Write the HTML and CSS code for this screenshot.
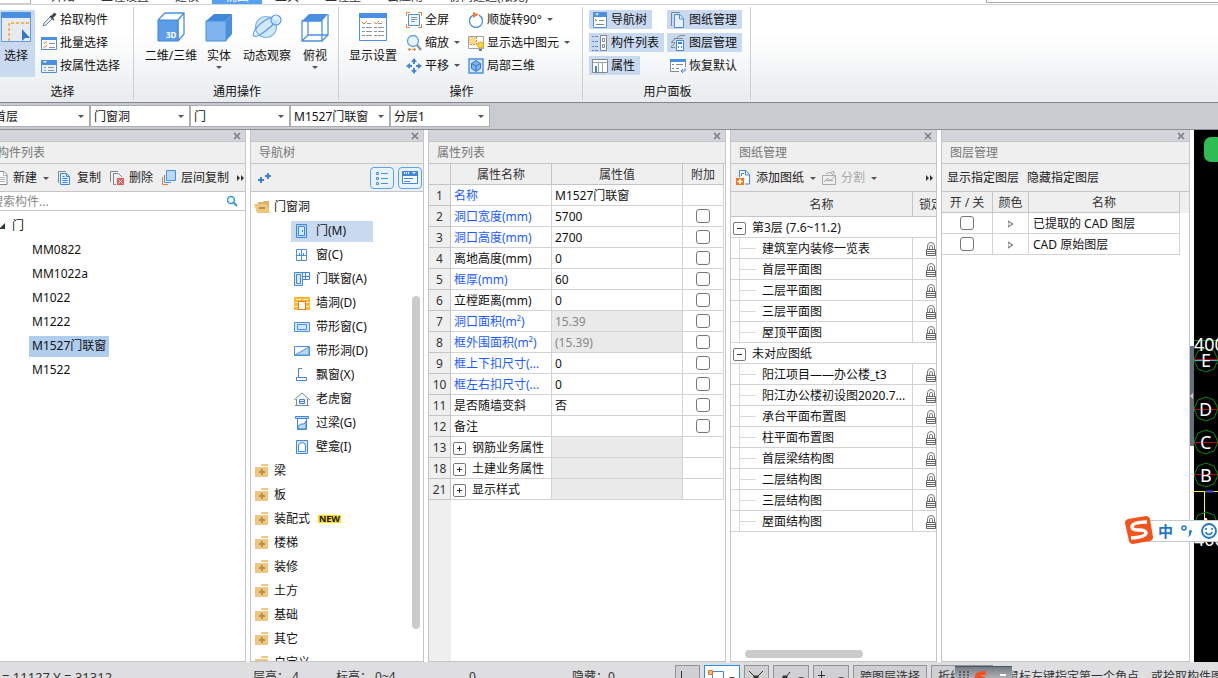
FILE: index.html
```html
<!DOCTYPE html>
<html lang="zh-CN">
<head>
    <meta charset="UTF-8">
    <meta name="viewport" content="width=device-width, initial-scale=1.0">
    <title>土建建模</title>
    <link rel="stylesheet" href="styles.css">
</head>
<body>

    <!-- 图标库 -->
    <svg class="sprite" aria-hidden="true">
        <symbol id="i-select" viewBox="0 0 30 30"><path d="M.5.5h29v29H.5z" fill="#e9eaf0" stroke="#5c9de8"/><path d="M0 0h30v6H0z" fill="#4a90e2"/><path d="M8 29V11h20" fill="none" stroke="#f5a623" stroke-width="1.500" stroke-dasharray="3 2"/><path d="M21 17l8 9h-5l-3 3z" fill="#3577c4"/></symbol>
        <symbol id="i-3d" viewBox="0 0 30 30"><path d="M2 8l7-7h19v21l-6 7M22 8l6-7M22 8v21" fill="#fff" stroke="#4a90e2" stroke-width="1.300"/><path d="M2 8h20v21H2z" fill="#5c9de8" stroke="#3f87dc"/><text x="10" y="26" font-size="8" font-weight="bold" fill="#fff">3D</text></symbol>
        <symbol id="i-solid" viewBox="0 0 30 30"><path d="M2 9l8-7h18l-6 7z" fill="#3f87dc"/><path d="M22 9l6-7v20l-6 7z" fill="#4c8dde"/><path d="M2 9h20v20H2z" fill="#7db4f0" stroke="#4a90e2"/></symbol>
        <symbol id="i-orbit" viewBox="0 0 30 30"><circle cx="14" cy="15" r="10.500" fill="#d3e9fb" stroke="#7fb4ee" stroke-width="1.200"/><path d="M19 5Q3 13 1 23q3 6 25-15" fill="none" stroke="#5b9be6" stroke-width="1.200"/><circle cx="24" cy="8" r="5" fill="#d3e9fb" fill-opacity=".7" stroke="#5b9be6" stroke-width="1.200"/></symbol>
        <symbol id="i-top" viewBox="0 0 30 30"><path d="M2 9l7-7h19l-6 7z" fill="#4a90e2"/><path d="M2 9h20v20H2zM22 29l6-6V2M8 9v14h14M2 29l6-6M22 23h6" fill="none" stroke="#4a90e2" stroke-width="1.300"/></symbol>
        <symbol id="i-display" viewBox="0 0 30 30"><path d="M1.500 1.500h27v27h-27z" fill="#fff" stroke="#4a90e2"/><path d="M1 1h28v5H1z" fill="#4a90e2"/><path d="M9 11.500h4m7 0h4M4 15.500h3m1 0h6m2 0h3m1 0h6M4 19.500h3m1 0h6m2 0h3m1 0h6M4 23.500h3m1 0h6m2 0h3m1 0h6" stroke="#8b96a0"/><path d="M4 10l2 2 3-3m7 1l2 2 3-3" fill="none" stroke="#f08030"/></symbol>
        <symbol id="i-pick" viewBox="0 0 16 16"><path d="M2 14l1-3 7-7 2 2-7 7z" fill="#d8eaf8" stroke="#7a8793"/><path d="M9 4l4 4M10.500 4.500l3-3 1 1-3 3z" fill="#555" stroke="#444" stroke-width="1.500"/></symbol>
        <symbol id="i-batch" viewBox="0 0 16 16"><path d="M.5 2.500h15v12H.5z" fill="#fff" stroke="#4a90e2"/><path d="M0 2h16v3H0z" fill="#4a90e2"/><path d="M2 7.500l1 1 3-2M2 11.500l1 1 3-2" fill="none" stroke="#f08030"/><path d="M8 8.500h6M8 12.500h6" stroke="#8b96a0"/></symbol>
        <symbol id="i-attrsel" viewBox="0 0 16 16"><path d="M.5 2.500h15v12H.5z" fill="#e8f1fc" stroke="#4a90e2"/><path d="M0 2h16v5H0z" fill="#4a90e2"/><path d="M2 3h4L4 5z" fill="#fff"/><path d="M3 9.500h2m2 0h6M3 12.500h2m2 0h6" stroke="#8b96a0"/></symbol>
        <symbol id="i-full" viewBox="0 0 16 16"><path d="M2.500 2.500h11v11h-11z" fill="#eef5fd" stroke="#4a90e2"/><path d="M5 5.500h6M5 7.500h6M5 9.500h4" stroke="#8b96a0"/><path d="M.5 4V.5H4M12 .5h3.500V4M.5 12v3.500H4M12 15.500h3.500V12" fill="none" stroke="#f08030"/></symbol>
        <symbol id="i-zoom" viewBox="0 0 16 16"><circle cx="7" cy="6" r="5.500" fill="#e8f3fe" stroke="#5c9de8" stroke-width="1.300"/><path d="M11 10l4 5" stroke="#8b96a0" stroke-width="2.500"/><path d="M2 14.500h8M4 13l-2 1.500L4 16m4-3l2 1.500L8 16" fill="none" stroke="#f08030" stroke-dasharray="3 1"/></symbol>
        <symbol id="i-pan" viewBox="0 0 16 16"><path d="M8 0l3 4H9v2H7V4H5zM8 16l3-4H9v-2H7v2H5zM0 8l4-3v2h2v2H4v2zM16 8l-4-3v2h-2v2h2v2z" fill="#3f87dc"/></symbol>
        <symbol id="i-rotate" viewBox="0 0 16 16"><path d="M11 3.200a6.500 6.500 0 1 1-6 0" fill="none" stroke="#4a90e2" stroke-width="1.300"/><path d="M5 0l6 2.500L5 6z" fill="#f08030"/></symbol>
        <symbol id="i-showsel" viewBox="0 0 16 16"><path d="M.5 1.500h15v12H.5z" fill="#fff" stroke="#9aa4ad"/><path d="M1 2h7v7H1z" fill="#ffd98a"/><path d="M8.500 2v7.500H1" fill="none" stroke="#f08030" stroke-dasharray="2 1"/><circle cx="12.500" cy="10" r="3" fill="#ffd23c" stroke="#e8b010"/><path d="M11 14h3v2h-3z" fill="#777"/></symbol>
        <symbol id="i-local" viewBox="0 0 16 16"><path d="M1 1h14v14H1z" fill="#d5e7fb" stroke="#4a90e2" stroke-width="1.400"/><path d="M8 2.500l4.500 3v5l-4.500 3-4.500-3v-5z" fill="#7db4f0" stroke="#3577c4"/><path d="M3.500 5.500L8 8l4.500-2.500M8 8v5" fill="none" stroke="#3577c4"/></symbol>
        <symbol id="i-nav" viewBox="0 0 16 16"><path d="M1.500.5h13v15h-13z" fill="#fff" stroke="#4a90e2"/><path d="M1 0h14v5H1z" fill="#4a90e2"/><path d="M3 1.500h4L5 3.500z" fill="#fff"/><path d="M3.500 7v1.500H5M7 8.500h5M4 12.500h8" fill="none" stroke="#7d8892"/></symbol>
        <symbol id="i-complist" viewBox="0 0 16 16"><path d="M0 1.500h2M0 6.500h2M0 11.500h2M0 15.500h2M3 1.500h3M3 6.500h3M3 11.500h3M3 15.500h3" stroke="#4a90e2"/><path d="M8.500.5h6v15h-6z" fill="#fff" stroke="#7d8892"/><path d="M10.500 3.500h2v3h-2zM10.500 9.500h2v3h-2z" fill="none" stroke="#7d8892"/></symbol>
        <symbol id="i-attr" viewBox="0 0 16 16"><path d="M.5 1.500h15v13H.5z" fill="#fff" stroke="#7d8892"/><path d="M.5 4.500h15M6.500 4v10M10.500 4v10" stroke="#9aa4ad"/><path d="M3 8h2v6H3z" fill="#3f87dc"/></symbol>
        <symbol id="i-sheets" viewBox="0 0 16 16"><path d="M1.500 14V.5H10" fill="none" stroke="#7d8892"/><path d="M4.500 2.500H10l3.500 4v9h-9z" fill="#e8f2fd" stroke="#4a90e2"/><path d="M9.500 3v4h4" fill="none" stroke="#4a90e2"/></symbol>
        <symbol id="i-layers" viewBox="0 0 16 16"><path d="M6 3.500l4-3h5M4 3.500h9M5 4L1 7.500h4M1 11.500l4-3M1 12.500h4" fill="none" stroke="#7d8892"/><path d="M6.500 5.500h7v10h-7z" fill="#fff" stroke="#3f87dc"/><path d="M8 7h4v2H8zM8 11h1v2H8zM11 11h1v2h-1z" fill="#3f87dc"/></symbol>
        <symbol id="i-restore" viewBox="0 0 16 16"><path d="M9 13.500H.5v-12h15V9" fill="#fff" stroke="#7d8892"/><path d="M0 1h16v3H0z" fill="#4a90e2"/><path d="M2 6.500h2m2 0h7M2 10.500h2m2 0h3" stroke="#7d8892"/><path d="M15 10v3h-4m2-2l-2 2 2 2" fill="none" stroke="#3f87dc"/></symbol>
        <symbol id="i-new" viewBox="0 0 16 16"><path d="M2.500 1.500H11l3 3v10H2.500z" fill="#fff" stroke="#7d8892"/><path d="M10.500 1.500v4H14M4 7.500h8M4 9.500h8M4 11.500h8" fill="none" stroke="#a8b0b8"/></symbol>
        <symbol id="i-copy" viewBox="0 0 16 16"><path d="M1.500 13V1.500H9" fill="none" stroke="#7d8892"/><path d="M3.500 3.500h6l3 3v8h-9z" fill="#e1effd" stroke="#3f87dc"/><path d="M9.500 3.500v3h3M5.500 8.500h5M5.500 10.500h5M5.500 6.500h2M5.500 12.500h5" fill="none" stroke="#3f87dc"/></symbol>
        <symbol id="i-delete" viewBox="0 0 16 16"><path d="M1.500 12V1.500H9M7 14.500H4.500v-11h5l3 3V7" fill="none" stroke="#7d8892"/><path d="M8 8h7v7H8z" fill="#e05a5a"/><path d="M9.500 9.500l4 4m0-4l-4 4" stroke="#fff"/></symbol>
        <symbol id="i-floor" viewBox="0 0 16 16"><path d="M5.500.5h9v10h-9z" fill="#b9d8fa" stroke="#4a90e2"/><path d="M3.500 5v7.500H10" fill="none" stroke="#4a90e2"/><path d="M1.500 7v7.500H7" fill="none" stroke="#f08030"/></symbol>
        <symbol id="i-search" viewBox="0 0 12 12"><circle cx="5" cy="5" r="3.500" fill="#e6f4fb" stroke="#3c9acb" stroke-width="1.500"/><path d="M7.500 7.500L11 11" stroke="#3c9acb" stroke-width="2"/></symbol>
        <symbol id="i-plus2" viewBox="0 0 14 12"><path d="M0 8h6M3 5v6M7 4h6M10 1v6" stroke="#3f7fd0" stroke-width="2"/></symbol>
        <symbol id="i-listview" viewBox="0 0 16 16"><path d="M2.500 2.500h2v2h-2zM2.500 7.500h2v2h-2zM2.500 12.500h2v2h-2zM7 3.500h7M7 8.500h7M7 13.500h7" fill="none" stroke="#4a90e2"/></symbol>
        <symbol id="i-cardview" viewBox="0 0 16 16"><path d="M.5 1.500h15v12H.5z" fill="#fff" stroke="#3f87dc"/><path d="M0 1h16v5H0z" fill="#3f87dc"/><path d="M2 3h1m1 0h1m1 0h1" stroke="#fff" stroke-width="2"/><path d="M10 2h4l-2 2z" fill="#fff"/><path d="M2 8.500h9M2 11.500h6" stroke="#3f87dc"/></symbol>
        <symbol id="i-open" viewBox="0 0 16 16"><path d="M4 3h5l1-1h5v10H4z" fill="#ddb068"/><path d="M0 5h13l3 9H3z" fill="#efc67d"/><path d="M5 9h6" stroke="#a9803c" stroke-width="1.500"/></symbol>
        <symbol id="i-folder" viewBox="0 0 16 16"><path d="M7 2l1-1h6v2H7zM1 4h13v10H1z" fill="#efc67d"/><path d="M5 9h6M8 6v6" stroke="#b88e48" stroke-width="2"/></symbol>
        <symbol id="i-door" viewBox="0 0 16 16"><path d="M2.500 1.500h10v13h-10z" fill="#b9d8fa" stroke="#3f87dc"/><path d="M4.500 3.500h6v9h-6z" fill="#d8eafd" stroke="#3f87dc"/><path d="M8.500 7v2" stroke="#3f87dc"/></symbol>
        <symbol id="i-window" viewBox="0 0 16 16"><path d="M2.500 2.500h10v11h-10zM7.500 2v12M2 8.500h11M5.500 8V6m4 2V6" fill="none" stroke="#4a90e2"/></symbol>
        <symbol id="i-doorwin" viewBox="0 0 16 16"><path d="M.5 1.500h8v13h-8zM2.500 3.500h4v9h-4z" fill="#d8eafd" stroke="#3f87dc"/><path d="M8.500 1.500h7v7h-7zM11.500 1v8M8 5.500h8" fill="none" stroke="#3f87dc"/></symbol>
        <symbol id="i-wallhole" viewBox="0 0 16 16"><path d="M0 2h16v13H0z" fill="#ffb72e"/><path d="M2 4.500h5m2 0h5M1 7.500h3m8 0h3M1 11.500h3m8 0h3" stroke="#fff3d5"/><path d="M4.500 6.500h7v8h-7z" fill="#fff" stroke="#f07818"/></symbol>
        <symbol id="i-stripwin" viewBox="0 0 16 16"><path d="M.5 3.500h15v9H.5zM3.500 5.500h9v5h-9z" fill="#d2e5fa" stroke="#4a90e2"/></symbol>
        <symbol id="i-striphole" viewBox="0 0 16 16"><path d="M.5 3.500h15v9H.5z" fill="#fff" stroke="#4a90e2"/><path d="M1 12L15 4v8z" fill="#b9d8fa" stroke="#4a90e2"/></symbol>
        <symbol id="i-bay" viewBox="0 0 16 16"><path d="M8 1.500H4.500v9h8v3h-10v-3h2" fill="none" stroke="#4a80c8"/></symbol>
        <symbol id="i-dormer" viewBox="0 0 16 16"><path d="M0 9l8-7 8 7M2.500 8v6.500h11V8M1 14.500h14" fill="#f5f7f9" stroke="#7d8892"/><path d="M5.500 8.500h5v4h-5zM5 10.500h6" fill="#e0effd" stroke="#3f87dc"/></symbol>
        <symbol id="i-lintel" viewBox="0 0 16 16"><path d="M1.500 1.500h13v2h-13z" fill="#b9d8fa" stroke="#3f87dc"/><path d="M3.500 3.500h9v11h-9z" fill="#fff" stroke="#3f87dc"/><path d="M4 14v-3l3-2h3l2-3v8z" fill="#b9d8fa" stroke="#3f87dc"/></symbol>
        <symbol id="i-niche" viewBox="0 0 16 16"><path d="M2.500 1.500h11v13h-11z" fill="#d8eafd" stroke="#3f87dc"/><path d="M4.500 12.500V7q0-3.500 3.500-3.500T11.500 7v5.500z" fill="#fff" stroke="#3f87dc"/></symbol>
        <symbol id="i-addsheet" viewBox="0 0 16 16"><path d="M3.500 7V.5H10l3.500 4V14H9" fill="#fff" stroke="#3f87dc"/><path d="M9.500 1v4h4M5.500 6V3.500H8" fill="none" stroke="#3f87dc"/><path d="M0 8h8v7H0z" fill="#f07818"/><path d="M4 9v5M1.500 11.500h5" stroke="#fff" stroke-width="1.500"/></symbol>
        <symbol id="i-split" viewBox="0 0 16 16"><path d="M5 3.500l8-2v3M1.500 5.500h13v9h-13zM3 12l4-4 2 3 4-4M10 3l4 4M4 10.500h8" fill="none" stroke="#aaa"/></symbol>
        <symbol id="i-lock" viewBox="0 0 12 14"><path d="M2.500 7V4q0-3.500 3.500-3.500T9.500 4v3M4.500 7V4.500q0-1 1.500-1t1.500 1V7" fill="none" stroke="#777"/><path d="M1.500 7.500h9v6h-9zM1 9.500h10M1 11.500h10" fill="#fff" stroke="#666"/></symbol>
        <symbol id="i-close" viewBox="0 0 8 8"><path d="M1 1l6 6M7 1L1 7" stroke="#777b82" stroke-width="1.500"/></symbol>
        <symbol id="i-more" viewBox="0 0 8 6"><path d="M0 0l3 3-3 3zM4 0l3 3-3 3z" fill="#333"/></symbol>
    </svg>

    <div class="app">

        <!-- 菜单页签 -->
        <nav class="tabs">
            <div class="app-corner"></div>
            <a href="#">开始</a>
            <a href="#">工程设置</a>
            <a href="#">建模</a>
            <a href="#" class="active">视图</a>
            <a href="#">工具</a>
            <a href="#">工程量</a>
            <a href="#">云应用</a>
            <a href="#">协同建造(限免)</a>
            <div class="tabs-search"></div>
        </nav>

        <!-- 功能区 -->
        <header class="ribbon">
            <section class="group group-select">
                <div class="group-body">
                    <button class="big on"><svg><use href="#i-select"/></svg>选择</button>
                    <div class="stack">
                        <button class="small"><svg><use href="#i-pick"/></svg>拾取构件</button>
                        <button class="small"><svg><use href="#i-batch"/></svg>批量选择</button>
                        <button class="small"><svg><use href="#i-attrsel"/></svg>按属性选择</button>
                    </div>
                </div>
                <div class="group-title">选择</div>
            </section>
            <section class="group group-common">
                <div class="group-body">
                    <button class="big wide"><svg><use href="#i-3d"/></svg>二维/三维</button>
                    <button class="big"><svg><use href="#i-solid"/></svg>实体<i class="caret"></i></button>
                    <button class="big wide"><svg><use href="#i-orbit"/></svg>动态观察</button>
                    <button class="big"><svg><use href="#i-top"/></svg>俯视<i class="caret"></i></button>
                </div>
                <div class="group-title">通用操作</div>
            </section>
            <section class="group group-operate">
                <div class="group-body">
                    <button class="big wide"><svg><use href="#i-display"/></svg>显示设置</button>
                    <div class="stack">
                        <button class="small"><svg><use href="#i-full"/></svg>全屏</button>
                        <button class="small"><svg><use href="#i-zoom"/></svg>缩放<i class="caret"></i></button>
                        <button class="small"><svg><use href="#i-pan"/></svg>平移<i class="caret"></i></button>
                    </div>
                    <div class="stack">
                        <button class="small"><svg><use href="#i-rotate"/></svg>顺旋转90°<i class="caret"></i></button>
                        <button class="small"><svg><use href="#i-showsel"/></svg>显示选中图元<i class="caret"></i></button>
                        <button class="small"><svg><use href="#i-local"/></svg>局部三维</button>
                    </div>
                </div>
                <div class="group-title">操作</div>
            </section>
            <section class="group group-panels">
                <div class="group-body">
                    <div class="stack">
                        <button class="small on"><svg><use href="#i-nav"/></svg>导航树</button>
                        <button class="small on"><svg><use href="#i-complist"/></svg>构件列表</button>
                        <button class="small on"><svg><use href="#i-attr"/></svg>属性</button>
                    </div>
                    <div class="stack">
                        <button class="small on"><svg><use href="#i-sheets"/></svg>图纸管理</button>
                        <button class="small on"><svg><use href="#i-layers"/></svg>图层管理</button>
                        <button class="small"><svg><use href="#i-restore"/></svg>恢复默认</button>
                    </div>
                </div>
                <div class="group-title">用户面板</div>
            </section>
        </header>

        <!-- 楼层与构件切换 -->
        <div class="filters">
            <div class="combo"><select aria-label="楼层"><option>首层</option></select></div>
            <div class="combo"><select aria-label="构件大类"><option>门窗洞</option></select></div>
            <div class="combo"><select aria-label="构件类型"><option>门</option></select></div>
            <div class="combo"><select aria-label="构件"><option>M1527门联窗</option></select></div>
            <div class="combo"><select aria-label="分层"><option>分层1</option></select></div>
        </div>

        <main class="workspace">

            <!-- 构件列表 -->
            <section class="panel panel-components">
                <div class="grip"><button aria-label="关闭"><svg><use href="#i-close"/></svg></button></div>
                <h2>构件列表</h2>
                <div class="toolbar">
                    <button><svg><use href="#i-new"/></svg>新建<i class="caret"></i></button>
                    <button><svg><use href="#i-copy"/></svg>复制</button>
                    <button><svg><use href="#i-delete"/></svg>删除</button>
                    <button><svg><use href="#i-floor"/></svg>层间复制</button>
                    <button class="more" aria-label="更多"><svg><use href="#i-more"/></svg></button>
                </div>
                <div class="search">
                    <input type="text" aria-label="搜索构件" placeholder="搜索构件...">
                    <svg><use href="#i-search"/></svg>
                </div>
                <ul class="components">
                    <li class="root">门</li>
                    <li><span>MM0822</span></li>
                    <li><span>MM1022a</span></li>
                    <li><span>M1022</span></li>
                    <li><span>M1222</span></li>
                    <li><span class="selected">M1527门联窗</span></li>
                    <li><span>M1522</span></li>
                </ul>
            </section>

            <!-- 导航树 -->
            <section class="panel panel-nav">
                <div class="grip"><button aria-label="关闭"><svg><use href="#i-close"/></svg></button></div>
                <h2>导航树</h2>
                <div class="toolbar">
                    <button aria-label="添加"><svg class="plus"><use href="#i-plus2"/></svg></button>
                    <button class="view first" aria-label="列表视图"><svg><use href="#i-listview"/></svg></button>
                    <button class="view" aria-label="卡片视图"><svg><use href="#i-cardview"/></svg></button>
                </div>
                <div class="tree">
                    <ul>
                        <li><svg><use href="#i-open"/></svg>门窗洞</li>
                        <li class="child"><span class="selected"><svg><use href="#i-door"/></svg>门(M)</span></li>
                        <li class="child"><span><svg><use href="#i-window"/></svg>窗(C)</span></li>
                        <li class="child"><span><svg><use href="#i-doorwin"/></svg>门联窗(A)</span></li>
                        <li class="child"><span><svg><use href="#i-wallhole"/></svg>墙洞(D)</span></li>
                        <li class="child"><span><svg><use href="#i-stripwin"/></svg>带形窗(C)</span></li>
                        <li class="child"><span><svg><use href="#i-striphole"/></svg>带形洞(D)</span></li>
                        <li class="child"><span><svg><use href="#i-bay"/></svg>飘窗(X)</span></li>
                        <li class="child"><span><svg><use href="#i-dormer"/></svg>老虎窗</span></li>
                        <li class="child"><span><svg><use href="#i-lintel"/></svg>过梁(G)</span></li>
                        <li class="child"><span><svg><use href="#i-niche"/></svg>壁龛(I)</span></li>
                        <li><svg><use href="#i-folder"/></svg>梁</li>
                        <li><svg><use href="#i-folder"/></svg>板</li>
                        <li><svg><use href="#i-folder"/></svg>装配式<b class="new">NEW</b></li>
                        <li><svg><use href="#i-folder"/></svg>楼梯</li>
                        <li><svg><use href="#i-folder"/></svg>装修</li>
                        <li><svg><use href="#i-folder"/></svg>土方</li>
                        <li><svg><use href="#i-folder"/></svg>基础</li>
                        <li><svg><use href="#i-folder"/></svg>其它</li>
                        <li><svg><use href="#i-folder"/></svg>自定义</li>
                    </ul>
                    <div class="scroll-v"></div>
                </div>
            </section>

            <!-- 属性列表 -->
            <section class="panel panel-props">
                <div class="grip"><button aria-label="关闭"><svg><use href="#i-close"/></svg></button></div>
                <h2>属性列表</h2>
                <div class="props-body">
                    <table class="props">
                        <colgroup><col class="c-num"><col class="c-name"><col class="c-value"><col class="c-add"></colgroup>
                        <thead>
                            <tr><th></th><th>属性名称</th><th>属性值</th><th>附加</th></tr>
                        </thead>
                        <tbody>
                            <tr><th>1</th><td class="key">名称</td><td>M1527门联窗</td><td></td></tr>
                            <tr><th>2</th><td class="key">洞口宽度(mm)</td><td>5700</td><td><input type="checkbox" aria-label="附加洞口宽度"></td></tr>
                            <tr><th>3</th><td class="key">洞口高度(mm)</td><td>2700</td><td><input type="checkbox" aria-label="附加洞口高度"></td></tr>
                            <tr><th>4</th><td>离地高度(mm)</td><td>0</td><td><input type="checkbox" aria-label="附加离地高度"></td></tr>
                            <tr><th>5</th><td class="key">框厚(mm)</td><td>60</td><td><input type="checkbox" aria-label="附加框厚"></td></tr>
                            <tr><th>6</th><td>立樘距离(mm)</td><td>0</td><td><input type="checkbox" aria-label="附加立樘距离"></td></tr>
                            <tr><th>7</th><td class="key">洞口面积(m²)</td><td class="readonly">15.39</td><td><input type="checkbox" aria-label="附加洞口面积"></td></tr>
                            <tr><th>8</th><td class="key">框外围面积(m²)</td><td class="readonly">(15.39)</td><td><input type="checkbox" aria-label="附加框外围面积"></td></tr>
                            <tr><th>9</th><td class="key">框上下扣尺寸(...</td><td>0</td><td><input type="checkbox" aria-label="附加框上下扣尺寸"></td></tr>
                            <tr><th>10</th><td class="key">框左右扣尺寸(...</td><td>0</td><td><input type="checkbox" aria-label="附加框左右扣尺寸"></td></tr>
                            <tr><th>11</th><td>是否随墙变斜</td><td>否</td><td><input type="checkbox" aria-label="附加是否随墙变斜"></td></tr>
                            <tr><th>12</th><td>备注</td><td></td><td><input type="checkbox" aria-label="附加备注"></td></tr>
                            <tr><th>13</th><td><button class="fold plus" aria-label="展开"></button>钢筋业务属性</td><td class="readonly"></td><td></td></tr>
                            <tr><th>18</th><td><button class="fold plus" aria-label="展开"></button>土建业务属性</td><td class="readonly"></td><td></td></tr>
                            <tr><th>21</th><td><button class="fold plus" aria-label="展开"></button>显示样式</td><td class="readonly"></td><td></td></tr>
                        </tbody>
                    </table>
                </div>
            </section>

            <!-- 图纸管理 -->
            <section class="panel panel-sheets">
                <div class="grip"><button aria-label="关闭"><svg><use href="#i-close"/></svg></button></div>
                <h2>图纸管理</h2>
                <div class="toolbar">
                    <button><svg><use href="#i-addsheet"/></svg>添加图纸<i class="caret"></i></button>
                    <button class="off"><svg><use href="#i-split"/></svg>分割<i class="caret"></i></button>
                    <button class="more" aria-label="更多"><svg><use href="#i-more"/></svg></button>
                </div>
                <table class="sheets">
                    <colgroup><col class="c-sheet"><col class="c-lock"></colgroup>
                    <thead>
                        <tr><th>名称</th><th>锁定</th></tr>
                    </thead>
                    <tbody>
                        <tr class="floor"><td colspan="2"><button class="fold" aria-label="折叠"></button>第3层 (7.6~11.2)</td></tr>
                        <tr><td>建筑室内装修一览表</td><td><svg><use href="#i-lock"/></svg></td></tr>
                        <tr><td>首层平面图</td><td><svg><use href="#i-lock"/></svg></td></tr>
                        <tr><td>二层平面图</td><td><svg><use href="#i-lock"/></svg></td></tr>
                        <tr><td>三层平面图</td><td><svg><use href="#i-lock"/></svg></td></tr>
                        <tr><td>屋顶平面图</td><td><svg><use href="#i-lock"/></svg></td></tr>
                        <tr class="floor"><td colspan="2"><button class="fold" aria-label="折叠"></button>未对应图纸</td></tr>
                        <tr><td>阳江项目——办公楼_t3</td><td><svg><use href="#i-lock"/></svg></td></tr>
                        <tr><td>阳江办公楼初设图2020.7...</td><td><svg><use href="#i-lock"/></svg></td></tr>
                        <tr><td>承台平面布置图</td><td><svg><use href="#i-lock"/></svg></td></tr>
                        <tr><td>柱平面布置图</td><td><svg><use href="#i-lock"/></svg></td></tr>
                        <tr><td>首层梁结构图</td><td><svg><use href="#i-lock"/></svg></td></tr>
                        <tr><td>二层结构图</td><td><svg><use href="#i-lock"/></svg></td></tr>
                        <tr><td>三层结构图</td><td><svg><use href="#i-lock"/></svg></td></tr>
                        <tr><td>屋面结构图</td><td><svg><use href="#i-lock"/></svg></td></tr>
                    </tbody>
                </table>
                <div class="scroll-h"></div>
            </section>

            <!-- 图层管理 -->
            <section class="panel panel-layers">
                <div class="grip"><button aria-label="关闭"><svg><use href="#i-close"/></svg></button></div>
                <h2>图层管理</h2>
                <div class="toolbar">
                    <button>显示指定图层</button>
                    <button>隐藏指定图层</button>
                </div>
                <div class="layers-body">
                    <table class="layers">
                        <colgroup><col class="c-onoff"><col class="c-color"><col></colgroup>
                        <thead>
                            <tr><th>开 / 关</th><th>颜色</th><th>名称</th></tr>
                        </thead>
                        <tbody>
                            <tr><td><input type="checkbox" aria-label="已提取的 CAD 图层"></td><td><i class="expand"></i></td><td>已提取的 CAD 图层</td></tr>
                            <tr><td><input type="checkbox" aria-label="CAD 原始图层"></td><td><i class="expand"></i></td><td>CAD 原始图层</td></tr>
                        </tbody>
                    </table>
                </div>
            </section>

            <div class="splitter"><div class="splitter-handle"></div></div>

            <!-- 绘图区 -->
            <section class="canvas">
                <svg aria-label="绘图区">
                    <rect x="10" y="7" width="60" height="25" rx="7" fill="#2dbd52"/>
                    <path d="M0 229.500h60" stroke="#c00"/>
                    <path d="M0 230.500h60" stroke="#37b5c8"/>
                    <path d="M0 279.500h60M0 312.500h60M0 344.500h60" stroke="#c80000"/>
                    <path d="M0 361.500h60M10.500 361v40" stroke="#ff0" fill="none"/>
                    <path d="M11 361.500h9" stroke="#3a55d8" stroke-width="2"/>
                    <g fill="none" stroke="#0a8a0a">
                        <path d="M0 210.500h30"/>
                        <path id="bubble" d="M12 218l8 3 4 9-4 9-8 3-8-3-4-9 4-9z"/>
                        <use href="#bubble" y="49"/>
                        <use href="#bubble" y="82"/>
                        <use href="#bubble" y="115"/>
                        <use href="#bubble" y="164"/>
                    </g>
                    <g fill="#fff" font-size="18">
                        <text x="0" y="221">4000</text>
                        <text x="7" y="237">E</text>
                        <text x="5" y="286">D</text>
                        <text x="6" y="319">C</text>
                        <text x="6" y="352">B</text>
                        <text x="6" y="401">A</text>
                        <text x="0" y="416">4000</text>
                    </g>
                </svg>
            </section>
        </main>

        <!-- 状态栏 -->
        <footer class="status">
            <span class="pos">X = 11127 Y = 31312</span>
            <span class="height">层高： 4</span>
            <span class="level">标高： 0~4</span>
            <span class="count">0</span>
            <span class="hidden-count">隐藏：0</span>
            <div class="snaps">
                <button class="snap icon" aria-label="正交"><svg viewBox="0 0 16 16"><path d="M2.500 2v12H14" /></svg></button>
                <button class="snap drop on" aria-label="矩形选择"><svg viewBox="0 0 16 16"><path d="M4.500 2.500h11v12h-11z" stroke="#3f87dc"/><path d="M.5 1.500h4v4h-4z" fill="#f8b482" stroke="#e07828"/></svg><i class="caret"></i></button>
                <button class="snap icon" aria-label="交点"><svg viewBox="0 0 16 16"><path d="M1 2l7 7 7-7M8 9v6"/><path d="M6 7h4v4H6z" fill="#333"/></svg></button>
                <button class="snap drop" aria-label="端点"><svg viewBox="0 0 16 16"><path d="M13 3L8 9v6"/><path d="M6 7h4v4H6z" fill="#333"/></svg><i class="caret"></i></button>
                <button class="snap drop" aria-label="中点"><svg viewBox="0 0 16 16"><path d="M4.500 2v8M1 6.500h7"/></svg><i class="caret"></i></button>
                <button class="snap">跨图层选择</button>
                <button class="snap">折线选择</button>
            </div>
            <span class="hint">鼠标左键指定第一个角点，或拾取构件图元</span>
            <div class="ime-mini"><svg viewBox="0 0 56 16"><path d="M4 5h2m2 0h2m2 0h2M4 8h2m2 0h2m2 0h2M4 11h2m2 0h2m2 0h2" stroke="#222"/><path d="M31 6q-10 0-9 4l7 2q2 3-7 3" fill="none" stroke="#f4511e" stroke-width="4"/><path d="M45 8h6" stroke="#fff" stroke-width="2"/></svg></div>
        </footer>
    </div>

    <!-- 输入法悬浮条 -->
    <div class="ime">
        <svg class="ime-logo" viewBox="0 0 28 28"><path d="M3 3l18-3q3 0 4 3l3 18q0 3-3 4L8 28q-3 0-4-3L0 7q0-3 3-4z" fill="#f2541b"/><path d="M22 6Q7 6 7 11q0 3 7 3 7 0 7 3 0 4-15 5" fill="none" stroke="#fff" stroke-width="3.500"/></svg>
        <b>中</b>
        <svg class="ime-punct" viewBox="0 0 12 16"><circle cx="3" cy="5" r="2" fill="none" stroke="#1c78c8" stroke-width="1.500"/><path d="M8 8a1.500 1.500 0 1 1 2 2q0 3-3 4 2-2 1-4z" fill="#1c78c8"/></svg>
        <svg class="ime-face" viewBox="0 0 16 16"><circle cx="8" cy="8" r="7" fill="none" stroke="#1c78c8" stroke-width="1.800"/><path d="M5 5v2m6-2v2M4.500 9q3.500 5 7 0" fill="none" stroke="#1c78c8" stroke-width="1.500"/></svg>
    </div>

</body>
</html>
```

FILE: styles.css
```css
/* General */
* {
    box-sizing: border-box;
}

body {
    margin: 0;
    height: 100vh;
    overflow: hidden;
    position: relative;
    background: #fff;
    font-family: "Noto Sans", "Noto Sans CJK SC", sans-serif;
    font-size: 12px;
    line-height: 16px;
    color: #111;
}

button,
input,
select {
    font: inherit;
    color: inherit;
    margin: 0;
}

button {
    display: flex;
    align-items: center;
    background: none;
    border: 0;
    padding: 0;
    white-space: nowrap;
}

ul {
    list-style: none;
    margin: 0;
    padding: 0;
}

svg {
    width: 16px;
    height: 16px;
    flex: none;
}

.sprite {
    position: absolute;
    width: 0;
    height: 0;
}

.caret {
    border: 3px solid transparent;
    border-top-color: #555;
    border-bottom: 0;
}

/* The window sits partly off the left, top and bottom edges */
.app {
    display: flex;
    flex-direction: column;
    height: calc(100vh + 14px);
    margin-left: -10px;
}

/* Tabs */
.tabs {
    display: flex;
    flex: none;
    height: 16px;
    margin-top: -11px;
    border-bottom: 1px solid #d0d2d5;
}

.tabs a {
    padding: 0 13px;
    color: #333;
    text-decoration: none;
    white-space: nowrap;
}

.tabs a.active {
    background: #55a2f2;
    color: #fff;
}

.app-corner {
    width: 41px;
    height: 15px;
    margin-right: 7px;
    border-right: 1px solid #aaa;
    border-bottom: 1px solid #ccc;
}

.tabs-search {
    width: 232px;
    height: 14px;
    margin-left: auto;
    border: 1px solid #aaa;
    border-right: 0;
}

/* Ribbon */
.ribbon {
    display: flex;
    flex: none;
    height: 98px;
    padding-top: 2px;
    background: linear-gradient(#fff 30%, #e8ecee);
    border-bottom: 1px solid #80868c;
}

.group {
    display: flex;
    flex-direction: column;
    height: 93px;
    border-right: 1px solid #cdd0d3;
}

.group-body {
    display: flex;
    flex: 1;
    padding-top: 3px;
}

.group-title {
    height: 16px;
    padding-left: 2px;
    text-align: center;
}

.group-select { width: 144px; }
.group-common { width: 205px; }
.group-operate { width: 244px; }
.group-panels { width: 168px; }

.group-common .group-body { padding-left: 7px; }
.group-operate .group-body { padding-left: 4px; }
.group-panels .group-body { padding-left: 6px; }

.big {
    flex-direction: column;
    width: 36px;
    height: 67px;
    padding-top: 2px;
}

.big.wide {
    width: 60px;
}

.big svg {
    width: 30px;
    height: 30px;
    margin-bottom: 6px;
}

.big .caret {
    margin-top: 2px;
}

.group-select .big {
    width: 45px;
    padding-left: 7px;
}

.stack {
    display: flex;
    flex-direction: column;
    align-items: flex-start;
    gap: 4px;
    margin-left: 3px;
}

.group-operate .stack {
    width: 62px;
    margin-left: 0;
}

.small {
    gap: 3px;
    height: 19px;
    padding: 0 5px 0 3px;
}

.small .caret {
    margin-left: 2px;
}

.group-panels .stack {
    margin-left: 0;
    width: 78px;
}

.on {
    background: #c9d9f0;
}

/* Combos */
.filters {
    display: flex;
    flex: none;
    height: 27px;
    padding: 2px 0;
    background: #c8cbd0;
    border-bottom: 1px solid #8c9197;
}

.combo {
    position: relative;
    width: 100px;
}

.combo::after {
    content: "";
    position: absolute;
    right: 6px;
    top: 10px;
    border: 3px solid transparent;
    border-top-color: #555;
    border-bottom: 0;
    pointer-events: none;
}

.combo select {
    appearance: none;
    width: 100%;
    height: 22px;
    padding: 2px 3px 0;
    background: #fff;
    border: 1px solid #a9acb0;
    border-radius: 0;
}

/* Panels */
.workspace {
    display: flex;
    flex: 1;
    min-height: 0;
}

.panel {
    display: flex;
    flex-direction: column;
    flex: none;
    margin-right: 4px;
    overflow: hidden;
    background: #fff;
    border: 1px solid #c3c5c9;
    border-top: 0;
}

.panel-components { width: 256px; }
.panel-nav { width: 174px; }
.panel-props { width: 298px; }
.panel-sheets { width: 207px; }
.panel-layers { width: 249px; margin-right: 0; }

.grip {
    display: flex;
    flex: none;
    justify-content: flex-end;
    align-items: center;
    height: 12px;
    padding-right: 4px;
    background: #d3d5db;
    border-bottom: 1px solid #c3c5c9;
}

.grip svg {
    width: 8px;
    height: 8px;
}

.panel h2 {
    flex: none;
    height: 22px;
    margin: 0;
    padding-left: 8px;
    background: #efefef;
    border-bottom: 1px solid #c3c5c9;
    color: #777;
    font-size: 12px;
    font-weight: normal;
    line-height: 22px;
}

.toolbar {
    display: flex;
    flex: none;
    align-items: center;
    height: 28px;
    padding: 1px 0 0 5px;
    gap: 8px;
    background: #efefef;
    border-bottom: 1px solid #c3c5c9;
    color: #222;
}

.toolbar button {
    gap: 4px;
}

.toolbar .caret {
    margin-left: 2px;
}

.toolbar .off {
    color: #aaa;
}

.toolbar .more {
    margin-left: auto;
    padding-right: 2px;
}

.toolbar .more svg {
    width: 8px;
    height: 6px;
}

.panel-components .toolbar {
    padding-left: 2px;
}

.panel-components h2 {
    padding-left: 6px;
}

.panel-sheets .toolbar {
    gap: 5px;
}

/* Component list */
.search {
    display: flex;
    flex: none;
    align-items: center;
    height: 19px;
    padding-right: 7px;
    border-bottom: 1px solid #c3c5c9;
}

.search input {
    flex: 1;
    min-width: 0;
    height: 18px;
    padding: 0;
    border: 0;
    outline: 0;
    background: none;
}

.search input::placeholder {
    color: #888;
}

.search svg {
    width: 12px;
    height: 12px;
}

.components {
    padding-top: 3px;
}

.components li {
    display: flex;
    align-items: center;
    height: 24px;
    padding-left: 38px;
}

.components .root {
    padding-left: 8px;
    gap: 7px;
}

.components .root::before {
    content: "";
    border-left: 6px solid transparent;
    border-bottom: 6px solid #333;
}

.components span {
    padding: 2px 3px 3px;
}

.components .selected {
    background: #b0cdee;
}

/* Navigation tree */
.panel-nav .toolbar {
    padding: 1px 1px 0 7px;
    gap: 4px;
}

.toolbar .plus {
    width: 14px;
    height: 12px;
}

.view {
    justify-content: center;
    width: 24px;
    height: 22px;
    background: #e9f3fe;
    border: 1px solid #55a2f2;
    border-radius: 4px;
}

.view.first {
    margin-left: auto;
}

.tree {
    position: relative;
    flex: 1;
    min-height: 0;
    padding-top: 3px;
    overflow: hidden;
}

.tree li {
    display: flex;
    align-items: center;
    gap: 4px;
    height: 24px;
    padding-left: 3px;
}

.tree .child {
    padding-left: 40px;
}

.tree li span {
    display: flex;
    align-items: center;
    gap: 6px;
    width: 82px;
    height: 21px;
    padding-left: 3px;
    white-space: nowrap;
}

.tree .selected {
    background: #c9d9f0;
}

.new {
    margin-left: 4px;
    padding: 0 1px;
    background: #ffdf00;
    font-size: 9px;
    line-height: 8px;
}

.scroll-v {
    position: absolute;
    right: 3px;
    top: 104px;
    bottom: 32px;
    width: 8px;
    background: #cbcbcb;
    border-radius: 4px;
}

/* Tables */
table {
    table-layout: fixed;
    border-spacing: 0;
    flex: none;
}

th,
td {
    height: 21px;
    padding: 2px 3px 0;
    border-right: 1px solid #d3d3d3;
    border-bottom: 1px solid #d3d3d3;
    overflow: hidden;
    font-weight: normal;
    line-height: 16px;
    text-align: left;
    white-space: nowrap;
}

th {
    background: #efefef;
    border-color: #c3c5c9;
    color: #333;
    text-align: center;
}

input[type="checkbox"] {
    appearance: none;
    display: block;
    width: 14px;
    height: 14px;
    margin: 0 auto 2px;
    background: #fff;
    border: 1px solid #777;
    border-radius: 3px;
}

.fold {
    display: inline-block;
    position: relative;
    width: 13px;
    height: 13px;
    margin: 0 6px 0 -1px;
    border: 1px solid #777;
    border-radius: 2px;
    vertical-align: -2px;
}

.fold::before,
.fold.plus::after {
    content: "";
    position: absolute;
    left: 3px;
    top: 5px;
    width: 5px;
    height: 1px;
    background: #333;
}

.fold.plus::after {
    transform: rotate(90deg);
}

/* Properties */
.props-body {
    flex: 1;
    background: linear-gradient(90deg, #efefef 22px, #fff 22px);
}

.props {
    width: 295px;
}

.props .c-num { width: 22px; }
.props .c-name { width: 101px; }
.props .c-value { width: 131px; }

.props tbody th {
    padding: 2px 0 0;
}

.props .key {
    color: #1a5cff;
}

.props .readonly {
    background: #eaeaea;
    color: #888;
}

/* Drawings */
.sheets {
    width: 219px;
}

.sheets .c-sheet { width: 182px; }
.sheets .c-lock { width: 37px; }

.sheets thead th {
    height: 25px;
}

.sheets thead th + th {
    padding-left: 6px;
    text-align: left;
}

.sheets td:first-child {
    padding-left: 31px;
    background: linear-gradient(#d9d9d9, #d9d9d9) 9px 10px / 16px 1px no-repeat, linear-gradient(#d9d9d9, #d9d9d9) 8px 0 / 1px 100% no-repeat;
}

.sheets td + td {
    padding-left: 12px;
}

.sheets .floor td {
    padding-left: 3px;
    background: none;
}

.sheets svg {
    display: block;
    width: 12px;
    height: 14px;
}

.scroll-h {
    flex: none;
    width: 118px;
    height: 8px;
    margin: auto 0 3px 14px;
    background: #cbcbcb;
    border-radius: 4px;
}

/* Layers */
.layers-body {
    background: linear-gradient(#efefef 21px, #fff 21px);
}

.layers {
    width: 238px;
}

.layers .c-onoff { width: 51px; }
.layers .c-color { width: 36px; }

.layers td:last-child {
    padding-left: 4px;
}

.expand {
    display: block;
    width: 6px;
    height: 8px;
    margin: 0 auto;
    background: #777;
    clip-path: polygon(0 0, 100% 50%, 0 100%, 0 0, 1px 2px, 1px 6px, 4px 4px, 1px 2px);
}

/* Drawing area */
.splitter {
    display: flex;
    flex: none;
    align-items: center;
    width: 4px;
}

.splitter-handle {
    display: flex;
    align-items: center;
    width: 4px;
    height: 100px;
    background: #66717c;
}

.splitter-handle::before {
    content: "";
    border: 3px solid transparent;
    border-right-color: #ccc;
    border-left: 0;
}

.canvas {
    flex: 1;
    min-width: 0;
    overflow: hidden;
    background: #000;
}

.canvas svg {
    display: block;
    width: 100%;
    height: 100%;
}

/* Status bar */
.status {
    display: flex;
    flex: none;
    align-items: center;
    position: relative;
    height: 30px;
    padding-left: 1px;
    background: #dedee0;
    color: #333;
    white-space: nowrap;
}

.status span {
    flex: none;
}

.pos {
    width: 262px;
    font-size: 13px;
}

.height { width: 83px; }
.level { width: 133px; }
.count { width: 103px; }
.hidden-count { width: 103px; }

.snaps {
    display: flex;
    flex: none;
    gap: 4px;
    margin-right: 14px;
}

.snap {
    height: 24px;
    padding: 0 6px;
    background: #d0d0d2;
    border: 1px solid #929396;
}

.snap.icon {
    width: 25px;
    padding: 0 3px;
}

.snap.drop {
    width: 36px;
    padding: 0 3px;
}

.snap svg {
    fill: none;
    stroke: #333;
}

.snap .caret {
    margin: 2px 0 0 5px;
}

.snap.on {
    background: #fff;
    border-color: #2a90f0;
}

.ime-mini {
    position: absolute;
    left: 965px;
    top: 4px;
    width: 57px;
    height: 20px;
    background: linear-gradient(#777c84, #d5d7da);
    border-top: 1px solid #46566a;
}

.ime-mini svg {
    width: 56px;
    height: 16px;
}

/* Floating input method bar */
.ime {
    display: flex;
    align-items: center;
    position: absolute;
    right: 0;
    top: 520px;
    width: 81px;
    height: 22px;
    padding-left: 20px;
    background: #fff;
    border: 1px solid #c5c8cc;
    border-right: 0;
    color: #1c78c8;
}

.ime b {
    font-size: 15px;
    line-height: 20px;
}

.ime-logo {
    position: absolute;
    left: -13px;
    top: -5px;
    width: 28px;
    height: 28px;
}

.ime-punct {
    width: 12px;
    margin: 0 8px;
}
```
